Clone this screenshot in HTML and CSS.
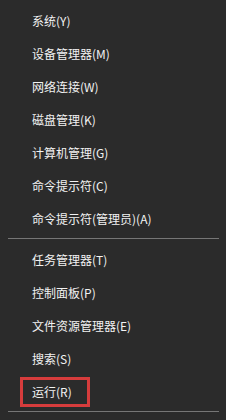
FILE: index.html
```html
<!DOCTYPE html>
<html lang="zh-CN">
<head>
    <meta charset="UTF-8">
    <meta name="viewport" content="width=device-width, initial-scale=1.0">
    <title>快速链接菜单</title>
    <link rel="stylesheet" href="styles.css">
</head>
<body>
    <div class="menu">
        <ul class="group">
            <li class="item"><span>系统(Y)</span></li>
            <li class="item"><span>设备管理器(M)</span></li>
            <li class="item"><span>网络连接(W)</span></li>
            <li class="item"><span>磁盘管理(K)</span></li>
            <li class="item"><span>计算机管理(G)</span></li>
            <li class="item"><span>命令提示符(C)</span></li>
            <li class="item"><span>命令提示符(管理员)(A)</span></li>
        </ul>
        <div class="separator"></div>
        <ul class="group">
            <li class="item"><span>任务管理器(T)</span></li>
            <li class="item"><span>控制面板(P)</span></li>
            <li class="item"><span>文件资源管理器(E)</span></li>
            <li class="item"><span>搜索(S)</span></li>
            <li class="item"><span class="mark">运行(R)</span></li>
        </ul>
        <div class="separator"></div>
    </div>
</body>
</html>
```

FILE: styles.css
```css
body {
    margin: 0;
    background-color: #2b2b2b;
    font-family: "Noto Sans CJK SC", "Noto Sans", sans-serif;
    color: #f2f2f2;
}
.menu {
    padding-top: 4px;
}
.group {
    list-style: none;
    margin: 0;
    padding: 0;
}
.item {
    display: flex;
    align-items: center;
    height: 33px;
    padding-left: 32px;
    font-size: 12px;
}
.separator {
    height: 1px;
    margin: 3px 7px 4px 8px;
    background-color: #767676;
}
.mark {
    display: inline-flex;
    align-items: center;
    box-sizing: border-box;
    width: 70px;
    height: 30px;
    margin-left: -12px;
    padding-left: 9px;
    border: 3px solid #d63c3c;
}
```
